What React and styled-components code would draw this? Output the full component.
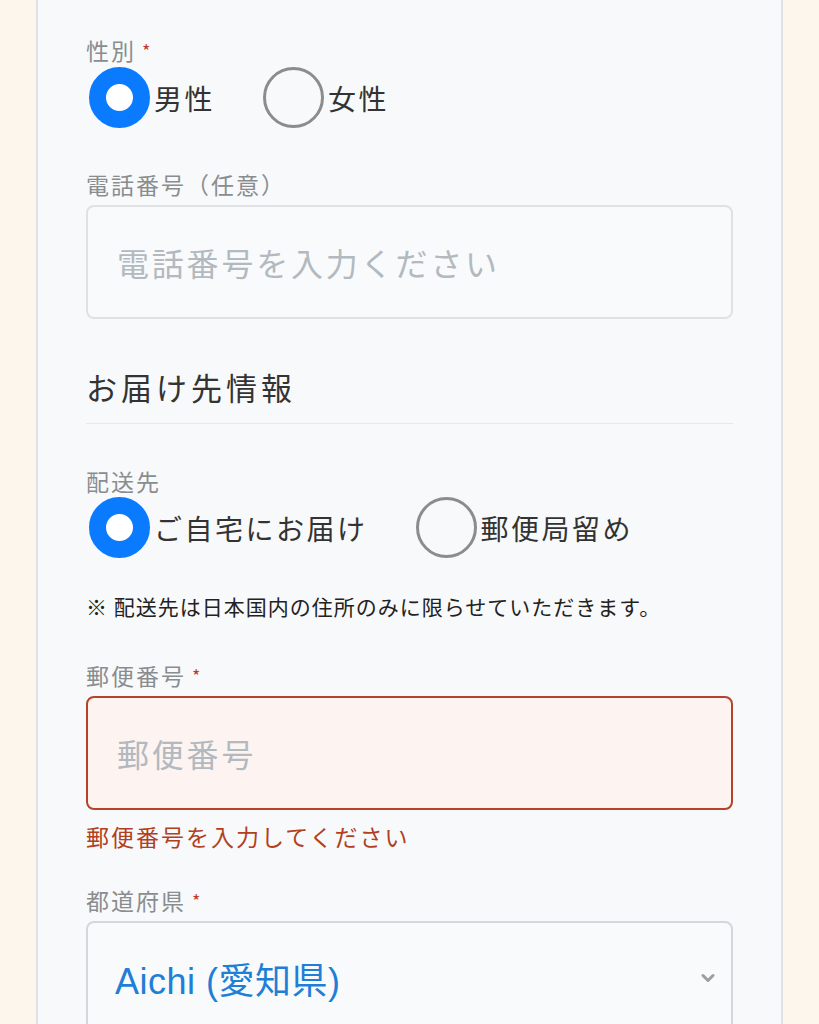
import React from "react";
import styled, { createGlobalStyle } from "styled-components";

const GlobalStyle = createGlobalStyle`
  html, body {
    margin: 0;
    padding: 0;
    background: #fcf6ec;
    font-family: "Noto Sans CJK JP", "Noto Sans", sans-serif;
  }
`;

const Page = styled.div`
  padding: 0 36px;
  height: 1024px;
  overflow: hidden;
`;

const Card = styled.div`
  background: #f8f9fa;
  border-left: 2px solid #dfe3e6;
  border-right: 2px solid #dfe3e6;
  padding: 34px 48px 40px;
  min-height: 1100px;
`;

const Label = styled.div`
  font-size: 23px;
  letter-spacing: 2px;
  line-height: 32px;
  color: #8a8d90;
  margin-top: ${(p) => p.$mt || 0}px;
`;

const Required = styled.span`
  color: #c0392b;
  font-size: 18px;
  margin-left: 6px;
  vertical-align: top;
`;

const RadioGroup = styled.div`
  display: flex;
  align-items: center;
  gap: 48px;
  padding-left: 3px;
  margin-top: ${(p) => p.$mt || 0}px;
`;

const RadioItem = styled.label`
  display: flex;
  align-items: center;
  gap: 4px;
  font-size: 28px;
  letter-spacing: 2.5px;
  color: #333;
`;

const RadioCircle = styled.span`
  box-sizing: border-box;
  width: 61px;
  height: 61px;
  border-radius: 50%;
  border: ${(p) => (p.$checked ? "17px solid #0a7bff" : "3px solid #8c8c8c")};
  background: ${(p) => (p.$checked ? "#fff" : "transparent")};
`;

const Input = styled.div`
  box-sizing: border-box;
  height: 114px;
  margin-top: 5px;
  border: 2px solid ${(p) => (p.$error ? "#b3432a" : "#dfe1e3")};
  background: ${(p) => (p.$error ? "#fdf4f1" : "#f9fafb")};
  border-radius: 8px;
  display: flex;
  align-items: center;
  padding: 0 29px;
  font-size: 32px;
  letter-spacing: 2.8px;
  color: #b2b9bf;
`;

const Heading = styled.h2`
  margin: 48px 0 0;
  font-size: 31px;
  font-weight: 400;
  letter-spacing: 4px;
  line-height: 40px;
  color: #333;
  padding-bottom: 16px;
  border-bottom: 1px solid #e6e8ea;
`;

const Note = styled.p`
  margin: 33px 0 0;
  font-size: 21px;
  letter-spacing: 1px;
  line-height: 30px;
  color: #222;
`;

const ErrorText = styled.p`
  margin: 11px 0 0;
  font-size: 23px;
  letter-spacing: 2px;
  line-height: 30px;
  color: #b0401e;
`;

const Select = styled.div`
  box-sizing: border-box;
  height: 114px;
  margin-top: 5px;
  border: 2px solid #d2d7dc;
  border-radius: 8px;
  background: #f9fafb;
  display: flex;
  align-items: center;
  justify-content: space-between;
  padding: 0 16px 0 27px;
  font-family: "Liberation Sans", "Noto Sans CJK JP", sans-serif;
  font-size: 36px;
  letter-spacing: 0.5px;
  color: #1f7fd6;
`;

const Chevron = () => (
  <svg width="14" height="10" viewBox="0 0 14 10">
    <path d="M2 2.5 L7 7.5 L12 2.5" fill="none" stroke="#9e9e9e" strokeWidth="3" strokeLinecap="round" strokeLinejoin="round" />
  </svg>
);

function Radio({ checked, children }) {
  return (
    <RadioItem>
      <RadioCircle $checked={checked} />
      {children}
    </RadioItem>
  );
}

export default function App() {
  return (
    <Page>
      <GlobalStyle />
      <Card>
        <Label>
          性別<Required>*</Required>
        </Label>
        <RadioGroup $mt={1}>
          <Radio checked>男性</Radio>
          <Radio>女性</Radio>
        </RadioGroup>

        <Label $mt={40}>電話番号（任意）</Label>
        <Input>電話番号を入力ください</Input>

        <Heading>お届け先情報</Heading>

        <Label $mt={41}>配送先</Label>
        <RadioGroup $mt={0}>
          <Radio checked>ご自宅にお届け</Radio>
          <Radio>郵便局留め</Radio>
        </RadioGroup>
        <Note>※ 配送先は日本国内の住所のみに限らせていただきます。</Note>

        <Label $mt={38}>
          郵便番号<Required>*</Required>
        </Label>
        <Input $error>郵便番号</Input>
        <ErrorText>郵便番号を入力してください</ErrorText>

        <Label $mt={33}>
          都道府県<Required>*</Required>
        </Label>
        <Select>
          <span>Aichi (愛知県)</span>
          <Chevron />
        </Select>
      </Card>
    </Page>
  );
}
